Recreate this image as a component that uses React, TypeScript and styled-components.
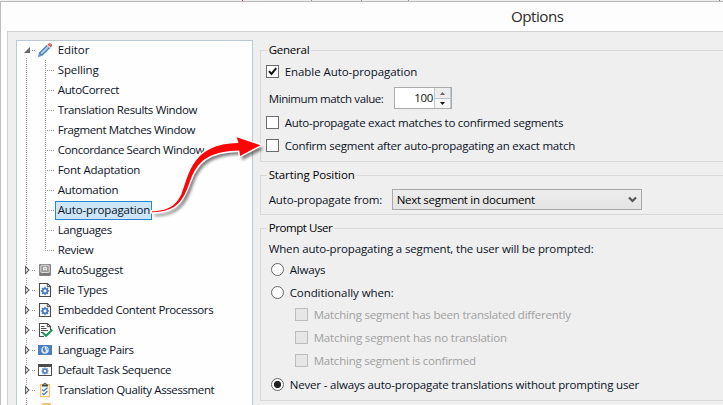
import React from 'react';
import styled, { createGlobalStyle, css } from 'styled-components';

const GlobalStyle = createGlobalStyle`
  * { box-sizing: border-box; }
  body {
    margin: 0;
    overflow: hidden;
    font-family: "Open Sans", "Noto Sans", sans-serif;
    font-size: 11.5px;
    color: #0b1226;
  }
`;

const Screen = styled.div`
  position: relative;
  display: flex;
  flex-direction: column;
  width: 723px;
  height: 405px;
  overflow: hidden;
  background: #fdfdfd;
`;

const BackdropStrip = styled.div`
  display: flex;
  flex: none;
  height: 1px;
  background: #efefef;
`;

const BackdropTick = styled.i<{ $gap: number; $color: string }>`
  width: 1px;
  height: 1px;
  margin-left: ${(p) => p.$gap}px;
  background: ${(p) => p.$color};
`;

const Dialog = styled.div`
  display: flex;
  flex: 1;
  flex-direction: column;
  min-height: 0;
  border-top: 1px solid #b9b9b9;
  border-left: 1px solid #bdbdbd;
`;

const TitleBar = styled.header`
  display: flex;
  flex: none;
  height: 29px;
  padding: 0 0 2px 510px;
  align-items: center;
  font-size: 15.2px;
  letter-spacing: -0.5px;
  color: #2b2b2b;
`;

const Body = styled.main`
  display: flex;
  flex: 1;
  gap: 7px;
  min-height: 0;
  margin-left: 6px;
  padding-left: 8px;
  border-top: 1px solid #d2d2d2;
  border-left: 1px solid #d2d2d2;
  background: #efefef;
`;

const TreePanel = styled.nav`
  flex: none;
  width: 237px;
  height: 380px;
  margin-top: 8px;
  border: 1px solid #b9cad4;
  background: #fefefe;
`;

const TreeList = styled.ul`
  margin: -1px 0 0;
  padding: 0;
  list-style: none;
`;

const TreeRow = styled.li`
  display: flex;
  align-items: center;
  height: 20px;

  svg { flex: none; display: block; }
`;

const Label = styled.span<{ $track?: number }>`
  line-height: 17px;
  white-space: nowrap;
  letter-spacing: ${(p) => p.$track ?? 0}px;
`;

const NodeLabel = styled(Label)`
  margin-left: 4.7px;
  line-height: 18px;
`;

const ChildLabel = styled(Label)<{ $selected?: boolean }>`
  height: 19px;
  margin-top: 1px;
  padding: 0 1.7px;
  border: 1px solid transparent;
  line-height: 16px;
  ${(p) =>
    p.$selected &&
    css`
      width: 97px;
      border-color: #2f86cf;
      background: #cde6f7;
    `}
`;

const Panels = styled.section`
  display: flex;
  flex: 1;
  flex-direction: column;
  gap: 13px;
  padding-top: 18px;
`;

const Group = styled.section<{ $height: number }>`
  flex: none;
  height: ${(p) => p.$height}px;
  padding-left: 5px;
  border: 1px solid #d9d9d9;
  border-right: 0;
`;

const Legend = styled.h2<{ $width: number; $track: number }>`
  width: ${(p) => p.$width}px;
  height: 20px;
  margin: -11px 0 0 1px;
  padding-left: 1.7px;
  background: #efefef;
  font-size: inherit;
  font-weight: 400;
  line-height: 20px;
  letter-spacing: ${(p) => p.$track}px;
  white-space: nowrap;
  color: #000;
`;

const Row = styled.div<{ $height?: number }>`
  display: flex;
  align-items: center;
  height: ${(p) => p.$height ?? 23}px;
  padding-left: 2.7px;
`;

const OptionRow = styled.label<{ $height?: number; $disabled?: boolean }>`
  display: flex;
  align-items: center;
  gap: 5.7px;
  height: ${(p) => p.$height ?? 23}px;
  color: ${(p) => (p.$disabled ? '#a0a0a0' : 'inherit')};
`;

const CheckBox = styled.span<{ $disabled?: boolean }>`
  display: flex;
  flex: none;
  width: 13px;
  height: 13px;
  border: 1px solid ${(p) => (p.$disabled ? '#bcbcbc' : '#6c6c6c')};
  background: ${(p) => (p.$disabled ? '#e6e6e6' : '#fff')};
`;

const Radio = styled.span<{ $on?: boolean }>`
  flex: none;
  width: 13px;
  height: 13px;
  border: 1px solid #666;
  border-radius: 50%;
  background: ${(p) => (p.$on ? 'radial-gradient(circle, #222 3.2px, #fff 4px)' : '#fff')};
`;

const RadioList = styled.div`
  margin-top: -1px;
  padding-left: 5px;
`;

const Conditions = styled.div`
  margin: -1px 0 1px;
  padding-left: 24px;
`;

const Spinner = styled.div`
  display: flex;
  width: 58px;
  height: 22px;
  margin-left: 10.5px;
  border: 1px solid #ababab;
  background: #fff;
`;

const SpinnerValue = styled.span`
  flex: 1;
  padding-right: 1px;
  text-align: right;
  line-height: 20px;
  letter-spacing: -0.3px;
  color: #111;
`;

const SpinnerButtons = styled.div`
  display: grid;
  grid-template-rows: 1fr 1fr;
  width: 17px;
  border-left: 1px solid #b9cad4;
  border-right: 1px solid #b9cad4;
`;

const SpinnerButton = styled.span`
  display: grid;
  place-items: center;
  background: #ededed;
  & + & { border-top: 1px solid #b9cad4; background: #f7f7f7; }
`;

const Select = styled.div`
  display: flex;
  align-items: center;
  justify-content: space-between;
  width: 250px;
  height: 21px;
  margin-left: 10px;
  padding: 0 4px 0 3.5px;
  border: 1px solid #a9a9a9;
  background: linear-gradient(#ededed, #e4e4e4);
  color: #000;
`;

const ArrowOverlay = styled.svg`
  position: absolute;
  left: 140px;
  top: 125px;
  pointer-events: none;
`;

type IconName =
  | 'pencil' | 'suggest' | 'fileGear' | 'verify' | 'language' | 'sequence' | 'quality' | 'folder';

function Gear({ x, y, s = 1 }: { x: number; y: number; s?: number }) {
  return (
    <g transform={`translate(${x} ${y}) scale(${s})`} stroke="#4a7fbd" fill="none">
      <circle r="2.5" strokeWidth="1.9" />
      <path
        d="M0-3V-4.4M0 3V4.4M-3 0H-4.4M3 0H4.4M-2.1-2.1L-3.1-3.1M2.1 2.1L3.1 3.1M-2.1 2.1L-3.1 3.1M2.1-2.1L3.1-3.1"
        strokeWidth="1.5"
      />
    </g>
  );
}

function NodeIcon({ name }: { name: IconName }) {
  return (
    <svg width="16" height="16" viewBox="0 0 16 16">
      {name === 'pencil' && (
        <g>
          <path d="M1 15L2.3 10.3L10.2 2.4L13.5 5.7L5.6 13.6Z" fill="#4b7fbe" />
          <path d="M3.5 11L10.6 3.9L11.9 5.2L4.8 12.3Z" fill="#b9d0ea" />
          <path d="M1 15L2 11.5L4.4 13.9Z" fill="#7d9fc6" />
          <path d="M9.6 3L10.8 1.9L14.1 5.1L13 6.2Z" fill="#e7e9ee" />
          <path d="M11.2 1.8C12.4.4 15.6 1.4 15 3.9L13.6 5.2L10.6 2.4Z" fill="#cf5040" />
          <circle cx="13.2" cy="2.6" r=".8" fill="#ee9d90" />
        </g>
      )}
      {name === 'suggest' && (
        <g>
          <rect x="2" y="2" width="12" height="12" rx="1" fill="#858585" />
          <path d="M3 11.5L4.5 10H11.5L13 11.5V13H3Z" fill="#777" />
          <rect x="3.8" y="3.3" width="8.4" height="7.2" rx=".5" fill="#999" stroke="#e5e5e5" strokeWidth=".9" />
          <path d="M6.7 8.6V5.3H9.3V8.6M6.7 7.2H9.3" fill="none" stroke="#fff" strokeWidth=".9" />
        </g>
      )}
      {name === 'fileGear' && (
        <g>
          <path d="M2.5 1.5H10.5L13.5 4.5V14.5H2.5Z" fill="#fff" stroke="#4c4c4c" strokeWidth="1.1" />
          <path d="M10.3 1.5V4.7H13.5" fill="none" stroke="#4c4c4c" />
          <Gear x={8} y={9} s={0.95} />
        </g>
      )}
      {name === 'verify' && (
        <g>
          <path d="M13.5 8V4.5L10.5 1.5H2.5V14.5H7" fill="#fff" stroke="#4c4c4c" strokeWidth="1.1" />
          <path d="M10.3 1.5V4.7H13.5M4 4.5H7.5M4 6.5H9.5M4 8.5H11M4 10.5H6" fill="none" stroke="#4c4c4c" />
          <path d="M5.8 10.8L9 13.8L15.3 7.8" fill="none" stroke="#139a5b" strokeWidth="2.1" />
        </g>
      )}
      {name === 'language' && (
        <g>
          <rect x="1" y="3" width="14" height="10" fill="#4a7fbd" />
          <circle cx="8" cy="8" r="3.8" fill="#dce8f5" />
          <path d="M5.6 6.2Q7 4.9 8.2 5.5L7.6 7L8.9 8.2L8.2 10.4L6.3 9.2ZM9.4 5.2L11 7L10 8Z" fill="#4a7fbd" />
        </g>
      )}
      {name === 'sequence' && (
        <g>
          <rect x="1.5" y="2.5" width="13" height="11" fill="#fff" stroke="#4c4c4c" />
          <path d="M1 2H15V5H1Z" fill="#4c4c4c" />
          <Gear x={8} y={9} s={0.82} />
        </g>
      )}
      {name === 'quality' && (
        <g>
          <rect x="3.6" y="2.6" width="8.8" height="12" fill="#fff" stroke="#edc36d" strokeWidth="1.3" />
          <path d="M5 4.6V2.4H6.3Q6.5.8 8 .8T9.7 2.4H11V4.6Z" fill="#444" />
          <circle cx="8" cy="2.2" r=".6" fill="#fff" />
          <path d="M5.2 7.6L6.6 8.8L10.6 5.8M5.2 11.2L6.8 12.6L10.6 9.2" fill="none" stroke="#4a7fbd" strokeWidth="1.4" />
        </g>
      )}
      {name === 'folder' && <path d="M6 1H14V15H3V4Z" fill="#efc66d" />}
    </svg>
  );
}

function Twisty({ open, first, hidden }: { open?: boolean; first?: boolean; hidden?: boolean }) {
  return (
    <svg width="20" height="20" viewBox="0 0 20 20" shapeRendering="crispEdges">
      {!first && <path d="M9.5 0V5" stroke="#999" strokeDasharray="1 1" />}
      {!hidden && <path d="M9.5 18V20M15 10.5H18" stroke="#999" strokeDasharray="1 1" />}
      {!hidden && (open ? (
        <path d="M13 7V13H7Z" fill="#666" shapeRendering="auto" />
      ) : (
        <path d="M8.6 6.6V13.4L12 10Z" fill="#fff" stroke="#5c5c5c" strokeWidth="1.1" shapeRendering="auto" />
      ))}
    </svg>
  );
}

function Connector({ last }: { last?: boolean }) {
  return (
    <svg width="38" height="20" viewBox="0 0 38 20" shapeRendering="crispEdges">
      <path
        d={`M9.5 0V20M28.5 0V${last ? 11 : 20}M30 10.5H38`}
        fill="none"
        stroke="#959595"
        strokeDasharray="1 1"
      />
    </svg>
  );
}

const editorPages = [
  { text: 'Spelling', track: -0.1 },
  { text: 'AutoCorrect', track: -0.32 },
  { text: 'Translation Results Window', track: -0.34 },
  { text: 'Fragment Matches Window', track: -0.385 },
  { text: 'Concordance Search Window', track: -0.41 },
  { text: 'Font Adaptation', track: -0.25 },
  { text: 'Automation', track: -0.28 },
  { text: 'Auto-propagation', track: -0.14 },
  { text: 'Languages', track: -0.36 },
  { text: 'Review', track: -0.33 },
];

const sections: { text: string; track: number; icon: IconName }[] = [
  { text: 'AutoSuggest', track: -0.15, icon: 'suggest' },
  { text: 'File Types', track: -0.28, icon: 'fileGear' },
  { text: 'Embedded Content Processors', track: -0.37, icon: 'fileGear' },
  { text: 'Verification', track: -0.21, icon: 'verify' },
  { text: 'Language Pairs', track: -0.37, icon: 'language' },
  { text: 'Default Task Sequence', track: -0.39, icon: 'sequence' },
  { text: 'Translation Quality Assessment', track: -0.385, icon: 'quality' },
];

const conditions = [
  { text: 'Matching segment has been translated differently', track: -0.2 },
  { text: 'Matching segment has no translation', track: -0.16 },
  { text: 'Matching segment is confirmed', track: -0.22 },
];

function OptionsTree() {
  return (
    <TreePanel>
      <TreeList>
        <TreeRow>
          <Twisty open first />
          <NodeIcon name="pencil" />
          <NodeLabel $track={-0.08}>Editor</NodeLabel>
        </TreeRow>
        {editorPages.map((page, i) => (
          <TreeRow key={page.text}>
            <Connector last={i === editorPages.length - 1} />
            <ChildLabel $track={page.track} $selected={page.text === 'Auto-propagation'}>
              {page.text}
            </ChildLabel>
          </TreeRow>
        ))}
        {sections.map((s) => (
          <TreeRow key={s.text}>
            <Twisty />
            <NodeIcon name={s.icon} />
            <NodeLabel $track={s.track}>{s.text}</NodeLabel>
          </TreeRow>
        ))}
        <TreeRow>
          <Twisty hidden />
          <NodeIcon name="folder" />
        </TreeRow>
      </TreeList>
    </TreePanel>
  );
}

export default function App() {
  return (
    <>
      <GlobalStyle />
      <Screen>
        <BackdropStrip>
          <BackdropTick $gap={242} $color="#a3324e" />
          <BackdropTick $gap={68} $color="#a98f98" />
          <BackdropTick $gap={49} $color="#8f8f98" />
          <BackdropTick $gap={46} $color="#8790b0" />
          <BackdropTick $gap={310} $color="#8d7777" />
        </BackdropStrip>
        <Dialog>
          <TitleBar>Options</TitleBar>
          <Body>
            <OptionsTree />
            <Panels>
              <Group $height={112}>
                <Legend $width={44} $track={-0.24}>General</Legend>
                <OptionRow>
                  <CheckBox>
                    <svg width="11" height="11" viewBox="0 0 11 11">
                      <path d="M2 5.2L4.5 8L9.2 2.2" fill="none" stroke="#111" strokeWidth="2" />
                    </svg>
                  </CheckBox>
                  <Label $track={-0.06}>Enable Auto-propagation</Label>
                </OptionRow>
                <Row $height={30}>
                  <Label $track={-0.4}>Minimum match value:</Label>
                  <Spinner>
                    <SpinnerValue>100</SpinnerValue>
                    <SpinnerButtons>
                      <SpinnerButton>
                        <svg width="5" height="3" viewBox="0 0 5 3"><path d="M0 3L2.5 0L5 3Z" fill="#666" /></svg>
                      </SpinnerButton>
                      <SpinnerButton>
                        <svg width="5" height="3" viewBox="0 0 5 3"><path d="M0 0L2.5 3L5 0Z" fill="#111" /></svg>
                      </SpinnerButton>
                    </SpinnerButtons>
                  </Spinner>
                </Row>
                <OptionRow $height={19}>
                  <CheckBox />
                  <Label $track={-0.258}>Auto-propagate exact matches to confirmed segments</Label>
                </OptionRow>
                <OptionRow $height={27}>
                  <CheckBox />
                  <Label $track={-0.22}>Confirm segment after auto-propagating an exact match</Label>
                </OptionRow>
              </Group>

              <Group $height={40}>
                <Legend $width={89} $track={-0.12}>Starting Position</Legend>
                <Row $height={29}>
                  <Label $track={-0.148}>Auto-propagate from:</Label>
                  <Select>
                    <Label $track={-0.307}>Next segment in document</Label>
                    <svg width="9" height="8" viewBox="0 0 9 8">
                      <path d="M1 1.5L4.5 5L8 1.5" fill="none" stroke="#555" strokeWidth="2.2" />
                    </svg>
                  </Select>
                </Row>
              </Group>

              <Group $height={173}>
                <Legend $width={67} $track={-0.43}>Prompt User</Legend>
                <Row $height={21}>
                  <Label $track={-0.145}>When auto-propagating a segment, the user will be prompted:</Label>
                </Row>
                <RadioList>
                  <OptionRow>
                    <Radio />
                    <Label $track={-0.18}>Always</Label>
                  </OptionRow>
                  <OptionRow>
                    <Radio />
                    <Label $track={-0.08}>Conditionally when:</Label>
                  </OptionRow>
                  <Conditions>
                    {conditions.map((c) => (
                      <OptionRow key={c.text} $disabled>
                        <CheckBox $disabled />
                        <Label $track={c.track}>{c.text}</Label>
                      </OptionRow>
                    ))}
                  </Conditions>
                  <OptionRow>
                    <Radio $on />
                    <Label $track={-0.175}>
                      Never - always auto-propagate translations without prompting user
                    </Label>
                  </OptionRow>
                </RadioList>
              </Group>
            </Panels>
          </Body>
        </Dialog>
        <ArrowOverlay width="130" height="100" viewBox="140 125 130 100">
          <defs>
            <filter id="soft" x="-20%" y="-20%" width="140%" height="150%">
              <feGaussianBlur stdDeviation="1.7" />
            </filter>
            <path
              id="swoosh"
              d="M152 211.3C171 211 177 203 181.5 194C189 176 191 143.5 238.5 143L236.7 137.3L260.5 145.2L240 156L239.3 150.5C207 151 197 163 190.5 180C184 198 179 212 152 212.2Z"
            />
          </defs>
          <use href="#swoosh" transform="translate(2.5 3.5)" fill="#000" stroke="#000" strokeWidth="1" opacity=".5" filter="url(#soft)" />
          <use href="#swoosh" fill="#fff" stroke="#fff" strokeWidth="3" strokeLinejoin="round" />
          <use href="#swoosh" fill="#fb0505" />
        </ArrowOverlay>
      </Screen>
    </>
  );
}
